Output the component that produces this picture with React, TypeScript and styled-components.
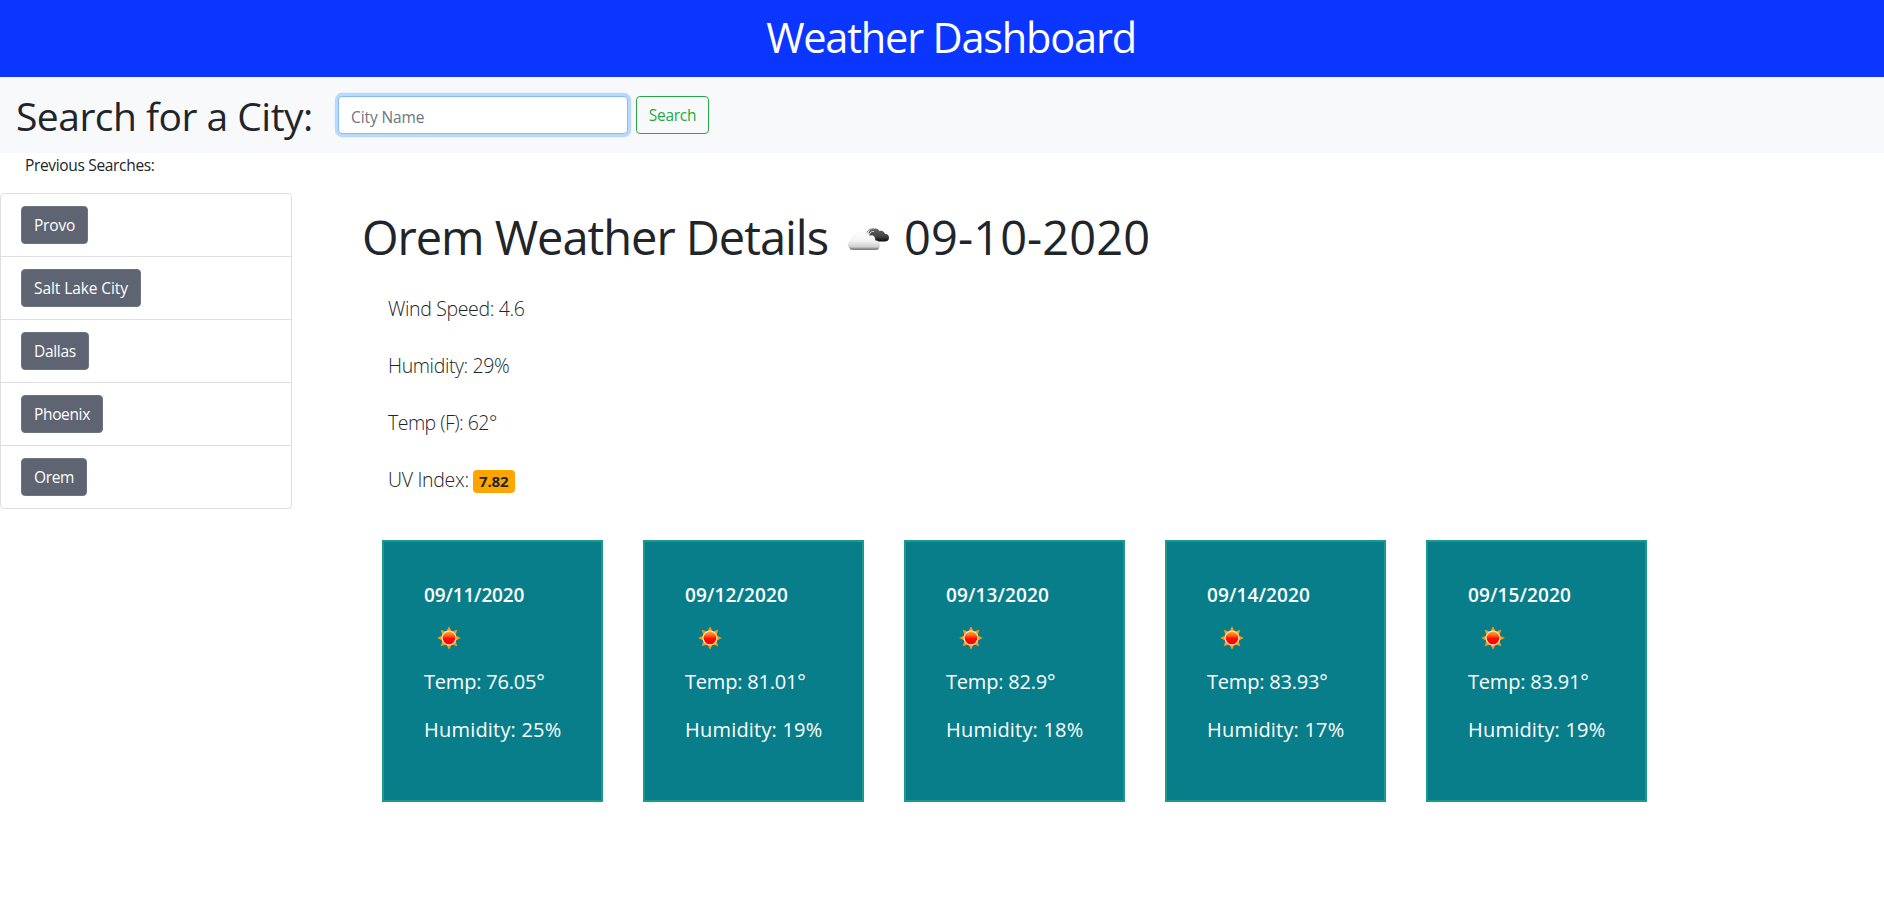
import React from "react";
import styled, { createGlobalStyle } from "styled-components";

const GlobalStyle = createGlobalStyle`
  *, *::before, *::after { box-sizing: border-box; }
  body {
    margin: 0;
    background: #fff;
    color: #212529;
    font-family: "Segoe UI", "Open Sans", "Noto Sans", sans-serif;
    font-size: 15.5px;
  }
  h1, h2, h3, p, ul { margin: 0; padding: 0; font-weight: 400; }
`;

const Header = styled.header`
  height: 77px;
  background: #0a36ff;
  text-align: center;
  padding-left: 18px;
`;

const Title = styled.h1`
  color: #fff;
  font-size: 41.5px;
  line-height: 74px;
  letter-spacing: -1.2px;
`;

const SearchBar = styled.form`
  display: flex;
  align-items: center;
  height: 76px;
  padding-left: 16px;
  background: #f8f9fb;
`;

const SearchLabel = styled.label`
  width: 322px;
  padding-top: 2px;
  font-size: 39px;
  line-height: 50px;
  letter-spacing: -0.52px;
`;

const CityInput = styled.input`
  width: 290px;
  height: 38px;
  margin-right: 8px;
  padding: 3px 12px 0;
  border: 1px solid #80bdff;
  border-radius: 4px;
  outline: 0;
  background: #fff;
  box-shadow: 0 0 0 3.2px rgba(0, 123, 255, 0.25);
  font: inherit;
  letter-spacing: -0.1px;
  &::placeholder { color: #6c757d; opacity: 1; }
`;

const SearchButton = styled.button`
  width: 73px;
  height: 38px;
  padding: 0;
  border: 1px solid #28a745;
  border-radius: 4px;
  background: transparent;
  color: #28a745;
  font: inherit;
  letter-spacing: -0.3px;
`;

const Content = styled.div`
  display: flex;
  align-items: flex-start;
`;

const Sidebar = styled.aside`
  width: 292px;
`;

const SidebarTitle = styled.p`
  padding-left: 25px;
  margin-bottom: 16px;
  line-height: 24px;
  letter-spacing: -0.33px;
`;

const CityList = styled.ul`
  list-style: none;
  border: 1px solid #dfdfdf;
  border-radius: 4px;
`;

const CityItem = styled.li`
  padding: 12px 20px;
  & + & { border-top: 1px solid #dfdfdf; }
`;

const CityButton = styled.button<{ $track: number }>`
  display: block;
  height: 38px;
  padding: 0 12px;
  border: 1px solid #6c757d;
  border-radius: 4px;
  background: #5e6472;
  color: #fff;
  font: inherit;
  letter-spacing: ${(p) => p.$track}px;
`;

const Main = styled.main`
  padding: 54px 0 0 70px;
`;

const Heading = styled.h2`
  display: flex;
  align-items: center;
  height: 58px;
  margin-bottom: 28px;
  padding-top: 1px;
  font-size: 47px;
  line-height: 58px;
`;

const Place = styled.span`
  width: 482px;
  letter-spacing: -1.03px;
`;

const Day = styled.span`
  margin-left: 12px;
  letter-spacing: 0.1px;
`;

const Details = styled.div`
  display: grid;
  row-gap: 27px;
  padding-left: 26px;
`;

const Detail = styled.p<{ $track: number }>`
  display: flex;
  align-items: center;
  height: 30px;
  font-size: 19.5px;
  font-weight: 300;
  letter-spacing: ${(p) => p.$track}px;
`;

const UvBadge = styled.span`
  width: 42px;
  height: 23px;
  margin: 4px 0 0 4px;
  border-radius: 4px;
  background: #ffa500;
  font-size: 15px;
  font-weight: 700;
  line-height: 23px;
  letter-spacing: -0.1px;
  text-align: center;
`;

const Forecast = styled.section`
  display: flex;
  gap: 40px;
  padding: 46px 0 0 20px;
`;

const Card = styled.article`
  width: 221px;
  height: 262px;
  padding: 38px 0 0 40px;
  border: 2px solid #1b998b;
  background: #087e8b;
  color: #fff;
  font-size: 20px;
  line-height: 30px;
`;

const CardDate = styled.h3<{ $track: number }>`
  font-size: 19px;
  font-weight: 600;
  line-height: 30px;
  letter-spacing: ${(p) => p.$track}px;
`;

const SunIcon = styled.svg`
  display: block;
  margin: 16px 0 17px 13px;
`;

const CardLine = styled.p<{ $track: number }>`
  letter-spacing: ${(p) => p.$track}px;
  & + & { margin-top: 18px; }
`;

const cities = [
  { name: "Provo", track: -0.2 },
  { name: "Salt Lake City", track: -0.08 },
  { name: "Dallas", track: -0.3 },
  { name: "Phoenix", track: -0.35 },
  { name: "Orem", track: -0.35 },
];

const days = [
  { date: "09/11/2020", track: -0.15, temp: "76.05", humidity: 25 },
  { date: "09/12/2020", track: 0.12, temp: "81.01", humidity: 19 },
  { date: "09/13/2020", track: 0.12, temp: "82.9", humidity: 18 },
  { date: "09/14/2020", track: 0.12, temp: "83.93", humidity: 17 },
  { date: "09/15/2020", track: 0.12, temp: "83.91", humidity: 19 },
];

function Clouds() {
  return (
    <svg width="48" height="30" viewBox="0 0 48 30">
      <defs>
        <linearGradient id="light" x1="0" y1="0" x2="0" y2="1">
          <stop offset="0" stopColor="#ffffff" />
          <stop offset="0.5" stopColor="#f4f4f4" />
          <stop offset="0.85" stopColor="#cfcfcf" />
          <stop offset="1" stopColor="#777777" />
        </linearGradient>
        <linearGradient id="dark" x1="0" y1="0" x2="0" y2="1">
          <stop offset="0" stopColor="#666666" />
          <stop offset="0.6" stopColor="#444444" />
          <stop offset="1" stopColor="#0a0a0a" />
        </linearGradient>
      </defs>
      <path
        d="M26.5 17 C23.5 14 23.8 8 28 7.2 C31 5.6 34.5 6.6 35.4 9 C38 8.2 40.7 9.6 40.9 12 C43.5 11.6 45 13.4 45 15.6 C45 18.6 43 19.6 40.5 19.6 L34 19.6 Z"
        fill="url(#dark)"
      />
      <path d="M22.5 11.5 C23.5 7.6 28 5.6 31.5 7.8" fill="none" stroke="#777" strokeWidth="1" />
      <path d="M25 12.8 C26 10 28 9 30 9.6" fill="none" stroke="#ddd" strokeWidth="1" />
      <path
        d="M8.5 27.5 C2.6 27.5 2.6 19 7.6 18.6 C7 13.8 11.4 12 14 13 C16.5 8.6 24 9 25.8 14 C29 12.6 31.6 15 31 18.4 C37.5 18.6 37.5 27.5 32 27.5 Z"
        fill="url(#light)"
        stroke="#e8e8e8"
        strokeWidth="0.4"
      />
      <path d="M6 26.6 Q7 27.4 8.5 27.4 H32 Q33.6 27.4 34.6 26.6" fill="none" stroke="#777" strokeWidth="1" />
    </svg>
  );
}

function Sun() {
  return (
    <SunIcon width="24" height="24" viewBox="-12 -12 24 24">
      <defs>
        <linearGradient id="sun" x1="0" y1="0" x2="0" y2="1">
          <stop offset="0" stopColor="#ffb02a" />
          <stop offset="0.3" stopColor="#ff6a1c" />
          <stop offset="0.55" stopColor="#ff0a00" />
          <stop offset="1" stopColor="#ff0000" />
        </linearGradient>
      </defs>
      {[0, 45, 90, 135, 180, 225, 270, 315].map((a) => (
        <path key={a} d="M-2.5 -6.8 L0 -11.8 L2.5 -6.8 Z" fill="#fb9a10" transform={`rotate(${a})`} />
      ))}
      <circle r="6.9" fill="url(#sun)" stroke="#ffe3b8" strokeWidth="1.2" />
    </SunIcon>
  );
}

export default function App() {
  return (
    <>
      <GlobalStyle />
      <Header>
        <Title>Weather Dashboard</Title>
      </Header>
      <SearchBar>
        <SearchLabel htmlFor="city">Search for a City:</SearchLabel>
        <CityInput id="city" placeholder="City Name" />
        <SearchButton type="button">Search</SearchButton>
      </SearchBar>
      <Content>
        <Sidebar>
          <SidebarTitle>Previous Searches:</SidebarTitle>
          <CityList>
            {cities.map((c) => (
              <CityItem key={c.name}>
                <CityButton $track={c.track}>{c.name}</CityButton>
              </CityItem>
            ))}
          </CityList>
        </Sidebar>
        <Main>
          <Heading>
            <Place>Orem Weather Details</Place>
            <Clouds />
            <Day>09-10-2020</Day>
          </Heading>
          <Details>
            <Detail $track={-0.36}>Wind Speed: 4.6</Detail>
            <Detail $track={-0.38}>Humidity: 29%</Detail>
            <Detail $track={-0.52}>Temp (F): 62°</Detail>
            <Detail $track={-0.3}>
              UV Index: <UvBadge>7.82</UvBadge>
            </Detail>
          </Details>
          <Forecast>
            {days.map((d) => (
              <Card key={d.date}>
                <CardDate $track={d.track}>{d.date}</CardDate>
                <Sun />
                <CardLine $track={-0.2}>Temp: {d.temp}°</CardLine>
                <CardLine $track={0.2}>Humidity: {d.humidity}%</CardLine>
              </Card>
            ))}
          </Forecast>
        </Main>
      </Content>
    </>
  );
}
